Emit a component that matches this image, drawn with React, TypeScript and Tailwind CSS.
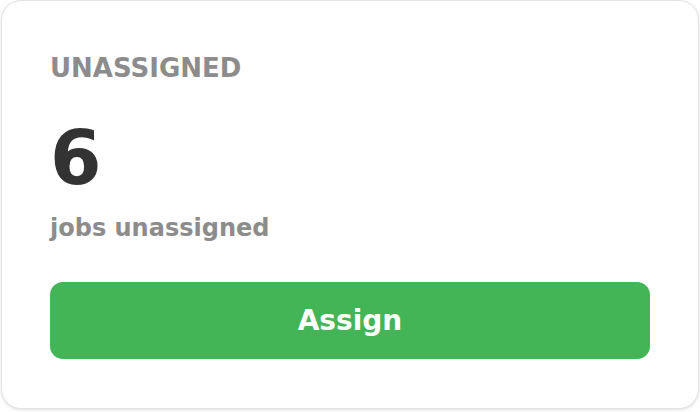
export default function App() {
  return (
    <div className="w-[700px] h-[412px] bg-white" style={{ fontFamily: '"DejaVu Sans", sans-serif' }}>
      <div className="w-[698px] h-[409px] ml-px border border-[#e3e3e3] rounded-[20px] shadow-[0_1px_3px_rgba(0,0,0,0.12)] bg-white px-[48px] pt-[51px] flex flex-col">
        <div className="text-[26px] leading-[32px] font-semibold tracking-[0px] text-[#8c8c8c]">UNASSIGNED</div>
        <div className="mt-[34px] text-[74px] leading-[80px] font-bold text-[#333333]">6</div>
        <div className="mt-[14px] text-[24px] leading-[32px] font-semibold text-[#8c8c8c]">jobs unassigned</div>
        <button className="mt-[38px] w-[600px] h-[77px] rounded-[13px] bg-[#44b556] text-white text-[28px] font-bold">Assign</button>
      </div>
    </div>
  );
}
